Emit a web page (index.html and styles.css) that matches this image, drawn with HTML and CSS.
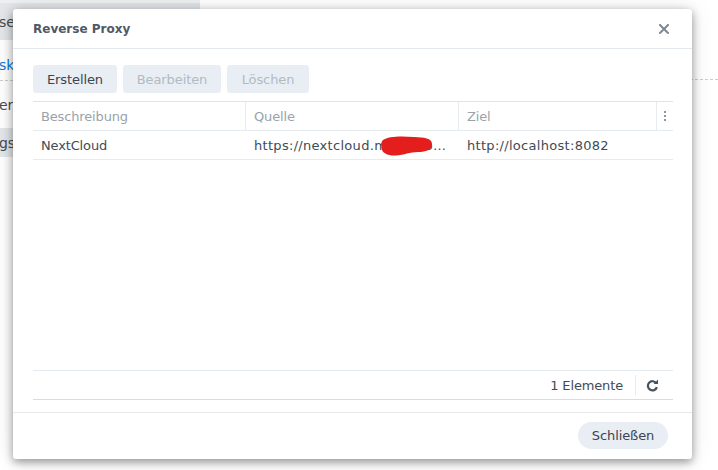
FILE: index.html
```html
<!DOCTYPE html>
<html lang="de">
<head>
<meta charset="utf-8">
<title>Reverse Proxy</title>
<link rel="stylesheet" href="styles.css">
</head>
<body>
<div class="page">
  <div class="side">
    <div class="page-row band"><span class="frag">se</span></div>
    <div class="page-row link-row"><span class="frag link">sk</span></div>
    <div class="page-row plain"><span class="frag">er</span></div>
    <div class="page-row band short"><span class="frag">gs</span></div>
  </div>
  <div class="content">
    <div class="divider"></div>
  </div>
</div>

<div class="dialog">
  <div class="dlg-header">
    <span class="dlg-title">Reverse Proxy</span>
    <svg class="close" width="10" height="10" viewBox="0 0 10 10"><path d="M1 1L9 9M9 1L1 9" stroke="#7f8891" stroke-width="2" stroke-linecap="square"/></svg>
  </div>
  <div class="dlg-main">
    <div class="toolbar">
      <button class="btn">Erstellen</button>
      <button class="btn disabled w-bearb">Bearbeiten</button>
      <button class="btn disabled w-losch">Löschen</button>
    </div>
    <div class="grid">
      <div class="grid-head">
        <div class="cell c1">Beschreibung</div>
        <div class="cell c2">Quelle</div>
        <div class="cell c3">Ziel</div>
        <div class="cell c4">
          <svg width="2" height="10" viewBox="0 0 2 10"><rect x="0" y="0" width="2" height="2" fill="#8d959e"/><rect x="0" y="4" width="2" height="2" fill="#8d959e"/><rect x="0" y="8" width="2" height="2" fill="#8d959e"/></svg>
        </div>
      </div>
      <div class="grid-row">
        <div class="cell c1">NextCloud</div>
        <div class="cell c2 src"><span class="ell url">https://nextcloud.meinedomain.de:443</span>
          <svg class="redact" width="54" height="22" viewBox="0 0 54 22"><path d="M3 5 C8 1 22 1 34 2 C44 2.5 52 3 52 9 C52 15 46 17 38 17 C30 17 24 20 16 20.5 C8 21 2 18 1.5 13 C1 9 1 7 3 5Z" fill="#e41d1d"/></svg>
        </div>
        <div class="cell c3 url">http://localhost:8082</div>
        <div class="cell c4"></div>
      </div>
      <div class="grid-empty"></div>
      <div class="grid-foot">
        <span class="count">1 Elemente</span>
        <span class="sep"></span>
        <svg class="refresh" width="13" height="13" viewBox="0 0 13 13"><path d="M10.3 4.2 A4.6 4.6 0 1 0 10.9 8.2" fill="none" stroke="#4a535d" stroke-width="2.2"/><path d="M7.6 4.9 L12 4.9 L12 0.6 Z" fill="#4a535d"/></svg>
      </div>
    </div>
  </div>
  <div class="dlg-footer">
    <button class="btn pill">Schließen</button>
  </div>
</div>
</body>
</html>
```

FILE: styles.css
```css
html, body {
  margin: 0;
  padding: 0;
}
body {
  width: 718px;
  height: 470px;
  overflow: hidden;
  position: relative;
  background: #ffffff;
  font-family: "DejaVu Sans", Verdana, sans-serif;
  font-size: 13px;
  letter-spacing: -0.15px;
  color: #414b55;
}

/* background page */
.page {
  display: flex;
  width: 718px;
}
.side {
  width: 200px;
  display: flex;
  flex-direction: column;
}
.content {
  flex: 1;
  padding-top: 79px;
}
.divider {
  border-top: 1px dashed #c9ced3;
}
.page-row {
  display: flex;
  align-items: center;
  height: 40px;
  box-sizing: border-box;
}
.page-row.band {
  background: #e4e7ea;
  border-top: 3px solid #eef0f2;
}
.link-row {
  height: 41px;
  padding-top: 9px;
  border-bottom: 1px dashed #c9ced3;
}
.plain {
  height: 47px;
}
.page-row.short {
  height: 29px;
  border-top: none;
}
.frag {
  margin-left: -1px;
  font-size: 14px;
  color: #454d56;
}
.frag.link {
  color: #0a78d8;
}

/* dialog */
.dialog {
  position: absolute;
  left: 13px;
  top: 9px;
  width: 679px;
  height: 450px;
  background: #fff;
  border-radius: 3px;
  box-shadow: 0 3px 10px rgba(0, 0, 0, 0.40), 0 0 24px rgba(0, 0, 0, 0.10);
  display: flex;
  flex-direction: column;
}
.dlg-header {
  height: 39px;
  border-bottom: 1px solid #e3e8ef;
  display: flex;
  align-items: center;
  justify-content: space-between;
  padding: 0 23px 0 20px;
}
.dlg-title {
  font-weight: bold;
  font-size: 12px;
  letter-spacing: 0;
  color: #505964;
}
.close {
  display: block;
}

.dlg-main {
  flex: 1;
  display: flex;
  flex-direction: column;
  padding: 16px 19px 12px 20px;
}
.toolbar {
  display: flex;
  gap: 6px;
  margin-bottom: 8px;
}
.btn {
  font-family: inherit;
  font-size: 13px;
  letter-spacing: -0.1px;
  height: 28px;
  width: 84px;
  border: none;
  border-radius: 3px;
  background: #e9eef4;
  color: #3b4550;
  padding: 0;
  cursor: pointer;
}
.btn.disabled {
  color: #b2bac3;
}
.w-bearb { width: 98px; }
.w-losch { width: 82px; }

.grid {
  flex: 1;
  display: flex;
  flex-direction: column;
  border-top: 1px solid #dfe5ec;
}
.grid-head, .grid-row {
  display: flex;
  height: 28px;
  border-bottom: 1px solid #e6ebf0;
}
.cell {
  display: flex;
  align-items: center;
  padding: 0 8px;
  box-sizing: border-box;
  white-space: nowrap;
  overflow: hidden;
}
.c1 { width: 212px; }
.c2 { width: 213px; }
.c3 { width: 198px; }
.c4 { width: 17px; justify-content: center; padding: 0; }
.grid-head .cell {
  color: #9aa2ab;
}
.grid-head .c2, .grid-head .c3, .grid-head .c4 {
  border-left: 1px solid #e6ebf0;
}
.grid-row .c2, .grid-row .c3 {
  padding-left: 9px;
}
.grid-head .c2, .grid-head .c3 {
  padding-left: 8px;
}
.url {
  letter-spacing: 0.3px;
}
.src {
  position: relative;
}
.ell {
  overflow: hidden;
  text-overflow: ellipsis;
  white-space: nowrap;
  display: block;
  width: 100%;
}
.redact {
  position: absolute;
  left: 135px;
  top: 4px;
}
.grid-empty {
  flex: 1;
  border-bottom: 1px solid #e6ebf0;
}
.grid-foot {
  height: 28px;
  border-bottom: 1px solid #d3dde8;
  display: flex;
  align-items: center;
  justify-content: flex-end;
  padding-right: 14px;
}
.count {
  color: #414b55;
}
.sep {
  width: 1px;
  height: 20px;
  background: #e6ebf0;
  margin: 0 10px 0 12px;
}
.refresh {
  display: block;
}

.dlg-footer {
  height: 47px;
  border-top: 1px solid #e6e8ea;
  display: flex;
  justify-content: flex-end;
  align-items: flex-start;
  padding: 9px 24px 0 0;
  box-sizing: border-box;
}
.btn.pill {
  width: 90px;
  height: 27px;
  border-radius: 14px;
  color: #3b4550;
}
```
